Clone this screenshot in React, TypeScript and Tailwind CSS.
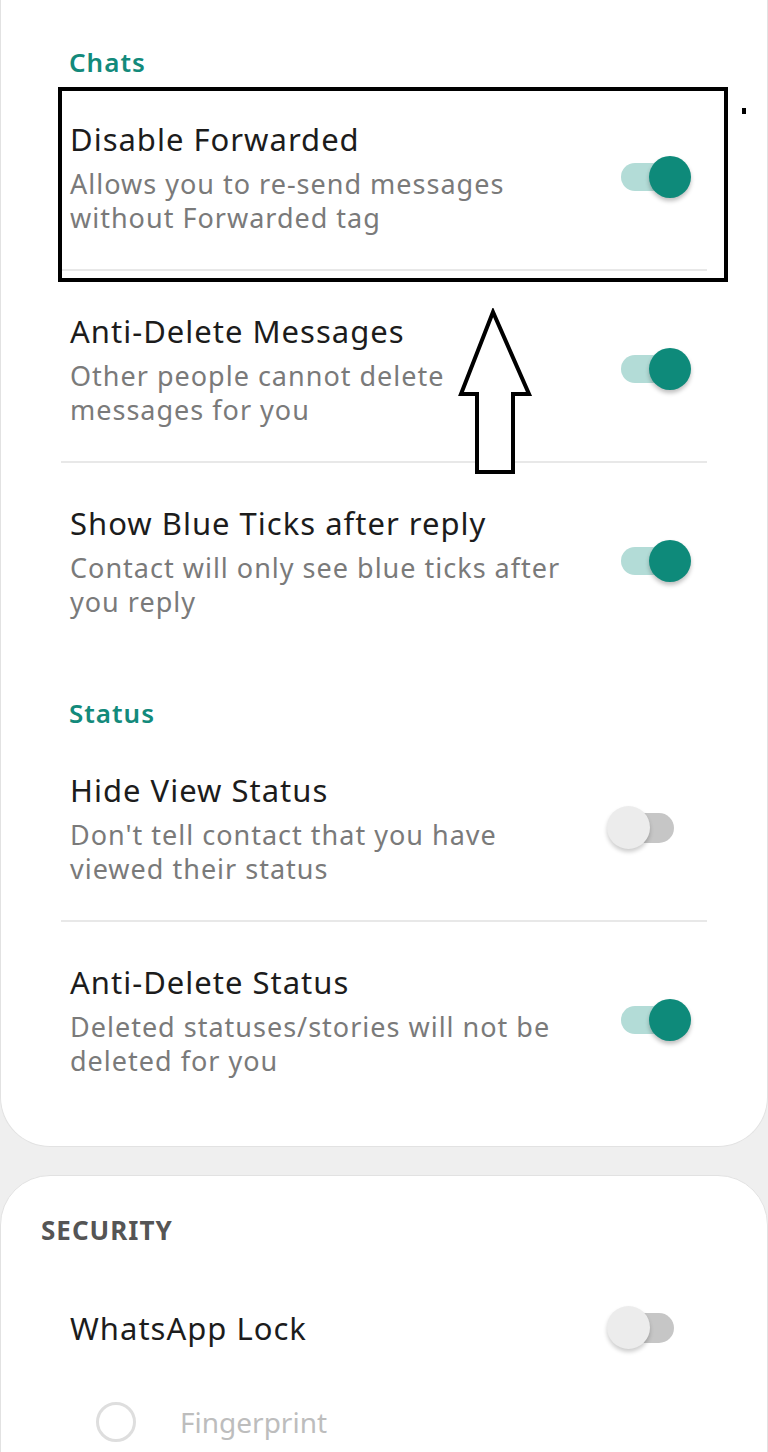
import React from "react"

type Item = { title: string; sub?: string; on: boolean; divider?: boolean }

function Toggle({ on }: { on: boolean }) {
    return (
        <div className="relative w-[86px] h-[44px] shrink-0">
            {on ? (
                <>
                    <div className="absolute left-[16px] right-[2px] top-[8px] h-[28px] rounded-full bg-[#b3dcd7]" />
                    <div className="absolute right-0 top-[1px] w-[42px] h-[42px] rounded-full bg-[#0e8a7a] shadow-[0_3px_4px_rgba(0,0,0,0.25)]" />
                </>
            ) : (
                <>
                    <div className="absolute left-[21px] right-[17px] top-[7px] h-[30px] rounded-full bg-[#c6c6c6]" />
                    <div className="absolute left-[2px] top-0 w-[43px] h-[43px] rounded-full bg-[#ececec] shadow-[0_3px_4px_rgba(0,0,0,0.2)]" />
                </>
            )}
        </div>
    )
}

function Row({ item }: { item: Item }) {
    return (
        <div className={`flex items-center pl-[9px] pr-[16px] pt-[40px] pb-[34px] border-b-2 ${item.divider ? "border-[#e8e8e8]" : "border-transparent"}`}>
            <div className="flex-1 flex flex-col gap-[8px]">
                <p className="text-[31px] leading-[40px] tracking-[1px] text-[#1c1c1c]">{item.title}</p>
                {item.sub && <p className="text-[27px] leading-[34px] tracking-[1px] text-[#7a7a7a] pr-[20px]">{item.sub}</p>}
            </div>
            <Toggle on={item.on} />
        </div>
    )
}

const chats: Item[] = [
    { title: "Disable Forwarded", sub: "Allows you to re-send messages without Forwarded tag", on: true, divider: true },
    { title: "Anti-Delete Messages", sub: "Other people cannot delete messages for you", on: true, divider: true },
    { title: "Show Blue Ticks after reply", sub: "Contact will only see blue ticks after you reply", on: true },
]

const status: Item[] = [
    { title: "Hide View Status", sub: "Don't tell contact that you have viewed their status", on: false, divider: true },
    { title: "Anti-Delete Status", sub: "Deleted statuses/stories will not be deleted for you", on: true },
]

export default function App() {
    return (
        <div className="relative w-[768px] h-[1452px] overflow-hidden bg-[#efefef] font-['Noto_Sans',sans-serif]">
            <div className="bg-white rounded-b-[50px] border-x border-b border-[#e2e2e2] pt-[45px] pb-[32px]">
                <div className="mx-[60px]">
                    <p className="pl-[8px] text-[26px] leading-[34px] font-semibold tracking-[1px] text-[#138a7b]">Chats</p>
                    {chats.map((c) => <Row key={c.title} item={c} />)}
                    <p className="pl-[8px] pt-[41px] text-[26px] leading-[34px] font-semibold tracking-[1px] text-[#138a7b]">Status</p>
                    {status.map((c) => <Row key={c.title} item={c} />)}
                </div>
            </div>

            <div className="mt-[28px] bg-white rounded-t-[50px] border border-[#e2e2e2] h-[300px] pt-[37px]">
                <p className="pl-[40px] text-[26px] leading-[34px] font-bold tracking-[1px] text-[#555555]">SECURITY</p>
                <div className="mx-[60px] mt-[59px] flex items-center pl-[9px] pr-[16px]">
                    <p className="flex-1 text-[31px] leading-[40px] tracking-[1px] text-[#1c1c1c]">WhatsApp Lock</p>
                    <Toggle on={false} />
                </div>
                <div className="mt-[52px] flex items-center pl-[95px] gap-[44px]">
                    <div className="w-[40px] h-[40px] rounded-full border-[3px] border-[#dedede]" />
                    <p className="text-[28px] leading-[36px] text-[#bdbdbd]">Fingerprint</p>
                </div>
            </div>

            {/* annotation overlay */}
            <div className="absolute left-[58px] top-[87px] w-[670px] h-[195px] border-[4px] border-black" />
            <div className="absolute left-[742px] top-[108px] w-[4px] h-[6px] bg-black" />
            <svg className="absolute left-[455px] top-[308px]" width="80" height="170" viewBox="0 0 80 170">
                <path d="M38 4 L74 86 L58 86 L58 164 L22 164 L22 86 L6 86 Z" fill="white" stroke="black" strokeWidth="4" strokeLinejoin="miter" />
            </svg>
        </div>
    )
}
